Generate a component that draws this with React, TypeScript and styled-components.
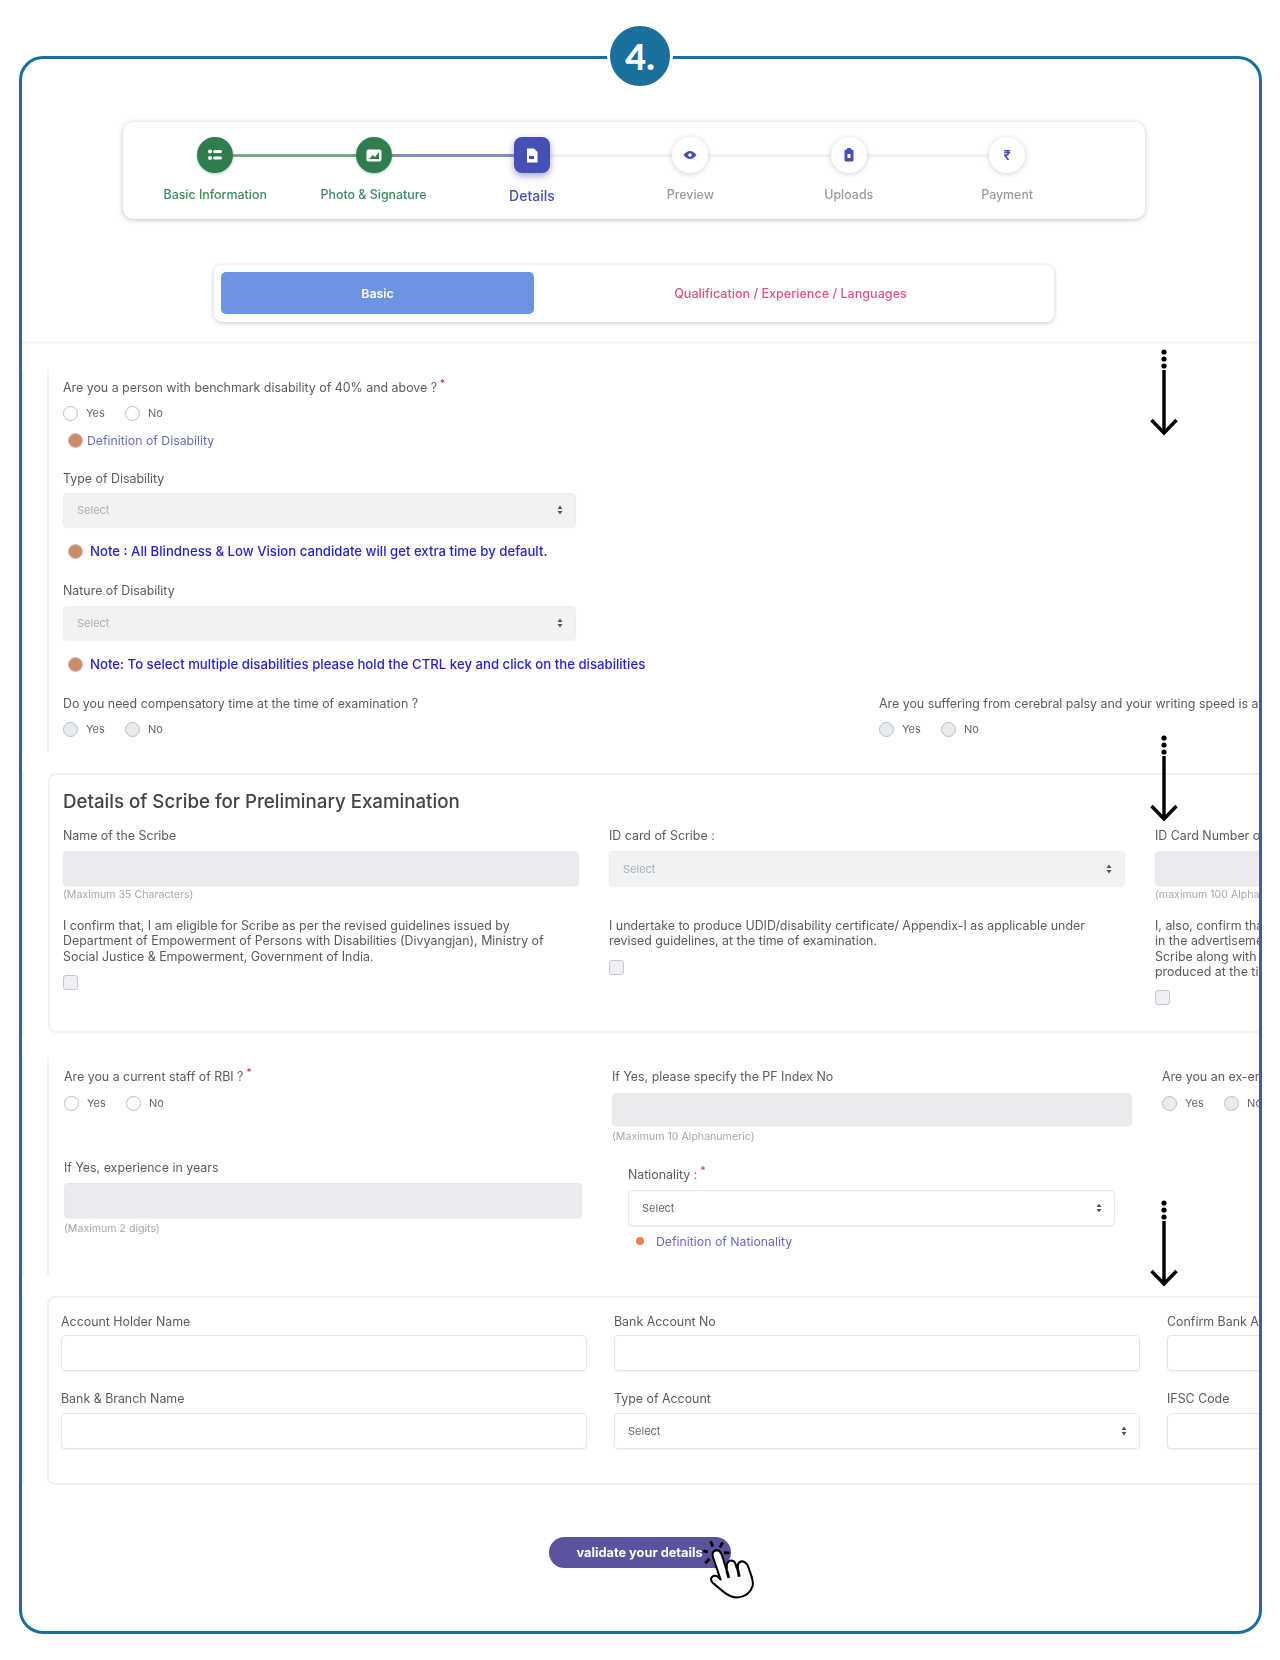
import React from "react";
import styled, { createGlobalStyle } from "styled-components";

const GlobalStyle = createGlobalStyle`
  html, body {
    margin: 0;
    padding: 0;
    background: #fff;
    font-family: "Inter", "Liberation Sans", sans-serif;
  }
`;

const Page = styled.div`
  width: 1280px;
  height: 1660px;
  padding: 56px 18px 0 19px;
  box-sizing: border-box;
  overflow: hidden;
`;
const Frame = styled.div`
  position: relative;
  height: 1578px;
  box-sizing: border-box;
  border: 3px solid #1b6f9c;
  border-radius: 24px;
  background: #fff;
`;
const Badge = styled.div`
  position: absolute;
  top: -36px;
  left: 585px;
  width: 60px;
  height: 60px;
  border: 3px solid #fff;
  border-radius: 50%;
  background: #1b6f9c;
  color: #fff;
  font: 900 36px/60px "Lato", sans-serif;
  text-align: center;
`;
const Clip = styled.div`
  height: 100%;
  overflow: hidden;
  border-radius: 21px;
  filter: blur(0.7px);
`;

/* stepper */
const StepCard = styled.div`
  width: 1022px;
  height: 97px;
  margin: 63px 0 0 101px;
  padding: 15px 0 0 13px;
  box-sizing: border-box;
  display: grid;
  grid-template-columns: repeat(6, 158.4px);
  background: #fff;
  border-radius: 10px;
  box-shadow: 0 1px 5px rgba(0, 0, 0, 0.25);
`;
const Step = styled.div<{ $line?: string }>`
  position: relative;
  display: flex;
  flex-direction: column;
  align-items: center;
  &::after {
    content: "";
    display: ${(p) => (p.$line ? "block" : "none")};
    position: absolute;
    top: 17px;
    left: 50%;
    width: 158px;
    height: 3px;
    background: ${(p) => p.$line};
  }
`;
const StepIcon = styled.div<{ $kind: "done" | "active" | "todo" }>`
  position: relative;
  z-index: 1;
  width: 36px;
  height: 36px;
  box-sizing: border-box;
  display: flex;
  align-items: center;
  justify-content: center;
  border-radius: ${(p) => (p.$kind === "active" ? "8px" : "50%")};
  color: ${(p) => (p.$kind === "todo" ? "#4650b4" : "#fff")};
  font: 700 13px "Inter", sans-serif;
  background: ${(p) =>
    p.$kind === "done" ? "#2f7d4f" : p.$kind === "active" ? "#4650b4" : "#fff"};
  box-shadow: ${(p) =>
    p.$kind === "active"
      ? "0 3px 7px rgba(70, 80, 180, 0.5)"
      : p.$kind === "todo"
        ? "0 1px 6px rgba(0, 0, 0, 0.18)"
        : "0 1px 3px rgba(47, 125, 79, 0.4)"};
`;
const StepLabel = styled.div<{ $color: string; $big?: boolean }>`
  margin-top: ${(p) => (p.$big ? "16px" : "15px")};
  font-size: ${(p) => (p.$big ? "14px" : "12.4px")};
  line-height: 14px;
  font-weight: 500;
  color: ${(p) => p.$color};
  white-space: nowrap;
`;

/* tabs */
const TabCard = styled.div`
  width: 840px;
  height: 57px;
  margin: 46px 0 0 192px;
  padding: 7px 7px 8px;
  box-sizing: border-box;
  display: flex;
  background: #fff;
  border-radius: 8px;
  box-shadow: 0 1px 5px rgba(0, 0, 0, 0.22);
`;
const ActiveTab = styled.div`
  width: 313px;
  height: 42px;
  display: flex;
  align-items: center;
  justify-content: center;
  border-radius: 5px;
  background: #6d93e3;
  color: #fff;
  font-size: 12.4px;
  font-weight: 600;
`;
const IdleTab = styled.div`
  flex: 1;
  display: flex;
  align-items: center;
  justify-content: center;
  color: #d8587f;
  font-size: 12.6px;
  font-weight: 500;
`;
const Divider = styled.div`
  height: 3px;
  margin-top: 19px;
  background: #f6f6f6;
`;

/* page sections */
const Rail = styled.div<{ $top: number; $height: number }>`
  height: ${(p) => p.$height}px;
  margin-top: ${(p) => p.$top}px;
  padding-left: 23px;
  box-sizing: border-box;
  border-left: 2px solid #f5f5f5;
`;
const RuledBlock = styled.div<{ $pad: number; $left?: number }>`
  height: 100%;
  padding: ${(p) => p.$pad}px 0 0 ${(p) => p.$left ?? 15}px;
  box-sizing: border-box;
  border-left: 2px solid #f3f3f3;
`;
const Card = styled.div`
  width: 1300px;
  box-sizing: border-box;
  border: 2px solid #f1f1f2;
  border-radius: 8px;
`;
const ScribeCard = styled(Card)`
  margin: 4px 0 0 1px;
  height: 260px;
  padding: 15px 0 0 13px;
`;
const BankCard = styled(Card)`
  height: 189px;
  padding: 16px 0 0 12px;
`;
const Title = styled.h3`
  margin: 0;
  font-size: 18.7px;
  line-height: 24px;
  font-weight: 500;
  color: #444;
`;
const Label = styled.div<{ $mt?: number; $mb?: number }>`
  margin-top: ${(p) => p.$mt ?? 0}px;
  margin-bottom: ${(p) => p.$mb ?? 0}px;
  font-size: 12.4px;
  line-height: 16px;
  color: #5b5b5b;
  white-space: nowrap;
`;
const Req = styled.sup`
  color: #d3232f;
  font-size: 10px;
  line-height: 0;
  margin-left: 3px;
`;
const RadioRow = styled.div<{ $mt?: number }>`
  display: flex;
  align-items: center;
  height: 16px;
  margin-top: ${(p) => p.$mt ?? 10}px;
  font-size: 11px;
  color: #666;
`;
const Radio = styled.span<{ $off?: boolean }>`
  width: 15px;
  height: 15px;
  box-sizing: border-box;
  border: 1px solid #b9bcc0;
  border-radius: 50%;
  background: ${(p) => (p.$off ? "#e9ecef" : "#fff")};
  margin-right: 8px;
`;
const RadioText = styled.span`
  width: 39px;
`;
const LinkRow = styled.div<{ $mt: number; $gap: number; $left?: number }>`
  display: flex;
  align-items: center;
  gap: ${(p) => p.$gap}px;
  height: 18px;
  margin-top: ${(p) => p.$mt}px;
  padding-left: ${(p) => p.$left ?? 5}px;
`;
const Dot = styled.span`
  width: 15px;
  height: 15px;
  box-sizing: border-box;
  border: 1px solid #c4c4c4;
  border-radius: 50%;
  background: #cf8a68;
`;
const SmallDot = styled.span`
  width: 8px;
  height: 8px;
  border-radius: 50%;
  background: #ec8350;
  margin-left: 4px;
`;
const DefLink = styled.span`
  font-size: 12.3px;
  color: #6a6cc0;
  white-space: nowrap;
`;
const Note = styled.span`
  font-size: 13.2px;
  font-weight: 500;
  color: #2a1fc4;
  white-space: nowrap;
`;
const SelectBox = styled.div<{ $w?: number; $h?: number; $off?: boolean }>`
  width: ${(p) => (p.$w ? `${p.$w}px` : "100%")};
  height: ${(p) => p.$h ?? 34}px;
  padding: 0 12px 0 13px;
  box-sizing: border-box;
  display: flex;
  align-items: center;
  justify-content: space-between;
  border-radius: 4px;
  font-size: 11px;
  color: ${(p) => (p.$off ? "#a9adb2" : "#666")};
  background: ${(p) => (p.$off ? "#f1f2f4" : "#fff")};
  border: 1px solid ${(p) => (p.$off ? "#eceef0" : "#e6e7ea")};
  box-shadow: 0 1px 2px rgba(0, 0, 0, 0.06);
`;
const TextBox = styled.div<{ $h?: number; $off?: boolean }>`
  height: ${(p) => p.$h ?? 36}px;
  box-sizing: border-box;
  border-radius: 4px;
  background: ${(p) => (p.$off ? "#e9ebee" : "#fff")};
  border: 1px solid ${(p) => (p.$off ? "#e6e8eb" : "#e4e5e9")};
  box-shadow: 0 1px 2px rgba(0, 0, 0, 0.05);
`;
const Hint = styled.div<{ $mt?: number }>`
  margin-top: ${(p) => p.$mt ?? 3}px;
  font-size: 10.6px;
  line-height: 12px;
  color: #a4a7ab;
  white-space: nowrap;
`;
const Para = styled.p`
  margin: 17px 0 0;
  font-size: 12.4px;
  line-height: 15.3px;
  color: #5a5a5a;
  white-space: nowrap;
`;
const Check = styled.div`
  width: 15px;
  height: 15px;
  margin-top: 11px;
  box-sizing: border-box;
  border: 1px solid #c5c9cf;
  border-radius: 3px;
  background: #eef0f3;
`;
const CompRow = styled.div`
  display: grid;
  grid-template-columns: 816px 600px;
  margin-top: 23px;
`;
const ScribeGrid = styled.div`
  display: grid;
  grid-template-columns: repeat(3, 516px);
  column-gap: 30px;
  margin-top: 14px;
`;
const StaffGrid = styled.div<{ $mt?: number }>`
  display: grid;
  grid-template-columns: 518px 520px 400px;
  column-gap: 30px;
  margin-top: ${(p) => p.$mt ?? 0}px;
`;
const Nationality = styled.div`
  padding: 7px 17px 0 16px;
`;
const BankGrid = styled.div<{ $mt?: number }>`
  display: grid;
  grid-template-columns: repeat(3, 526px);
  column-gap: 27px;
  margin-top: ${(p) => p.$mt ?? 0}px;
`;

/* submit and overlays */
const SubmitRow = styled.div`
  display: flex;
  justify-content: center;
  margin-top: 52px;
  padding-right: 2px;
`;
const SubmitButton = styled.div`
  width: 182px;
  height: 31px;
  box-sizing: border-box;
  padding-left: 28px;
  display: flex;
  align-items: center;
  border-radius: 16px;
  background: #5a549f;
  color: #fff;
  font-size: 12.8px;
  font-weight: 700;
  white-space: nowrap;
`;
const OverlayHand = styled.svg`
  position: absolute;
  left: 677px;
  top: 1479px;
`;
const OverlayArrow = styled.svg<{ $top: number }>`
  position: absolute;
  left: 1127px;
  top: ${(p) => p.$top}px;
`;

const Updown = () => (
  <svg width="6" height="10" viewBox="0 0 6 10">
    <path d="M3 0.5 L5.5 4 H0.5 Z M3 9.5 L0.5 6 H5.5 Z" fill="#555" />
  </svg>
);

const YesNo = ({ off, mt }: { off?: boolean; mt?: number }) => (
  <RadioRow $mt={mt}>
    <Radio $off={off} />
    <RadioText>Yes</RadioText>
    <Radio $off={off} />
    <RadioText>No</RadioText>
  </RadioRow>
);

const Arrow = ({ top }: { top: number }) => (
  <OverlayArrow $top={top} width="30" height="88" viewBox="0 0 30 88">
    <circle cx="15" cy="3" r="2.6" fill="#000" />
    <circle cx="15" cy="10" r="2.6" fill="#000" />
    <circle cx="15" cy="17" r="2.6" fill="#000" />
    <path d="M15 21 V84 M2.5 71 L15 84 L27.5 71" fill="none" stroke="#000" strokeWidth="3.4" />
  </OverlayArrow>
);

const stepIcons = [
  <svg width="16" height="14" viewBox="0 0 16 14" fill="#fff">
    <circle cx="3" cy="3.5" r="2" />
    <rect x="6" y="2" width="9" height="3" rx="1.5" />
    <circle cx="3" cy="10" r="2" />
    <rect x="6" y="8.5" width="9" height="3" rx="1.5" />
  </svg>,
  <svg width="16" height="13" viewBox="0 0 16 13">
    <rect x="0.5" y="0.5" width="15" height="12" rx="2" fill="#fff" />
    <path d="M3 10 L7 6 L9 8 L13 3 V10 Z" fill="#2f7d4f" />
  </svg>,
  <svg width="12" height="15" viewBox="0 0 12 15">
    <path d="M1 0.5 H8 L11.5 4 V14.5 H1 Z" fill="#fff" />
    <rect x="3" y="8" width="5" height="3" fill="#4650b4" />
  </svg>,
  <svg width="14" height="10" viewBox="0 0 14 10">
    <path d="M0.5 5 Q7 -3 13.5 5 Q7 13 0.5 5 Z" fill="#4650b4" />
    <circle cx="7" cy="5" r="1.8" fill="#fff" />
  </svg>,
  <svg width="10" height="14" viewBox="0 0 10 14">
    <rect x="0.5" y="1.5" width="9" height="12" rx="1.5" fill="#4650b4" />
    <rect x="3" y="0" width="4" height="3" rx="1" fill="#4650b4" />
    <rect x="3.5" y="6" width="3" height="4" fill="#fff" />
  </svg>,
  "₹",
];

const steps = [
  { label: "Basic Information", kind: "done", color: "#3f8a60", line: "#7aa98c" },
  { label: "Photo & Signature", kind: "done", color: "#3f8a60", line: "#8a89c4" },
  { label: "Details", kind: "active", color: "#4650a8", line: "#f3f3f3" },
  { label: "Preview", kind: "todo", color: "#9a9a9a", line: "#f3f3f3" },
  { label: "Uploads", kind: "todo", color: "#9a9a9a", line: "#f3f3f3" },
  { label: "Payment", kind: "todo", color: "#9a9a9a" },
] as const;

export default function App() {
  return (
    <Page>
      <GlobalStyle />
      <Frame>
        <Clip>
          <StepCard>
            {steps.map((s, i) => (
              <Step key={s.label} $line={"line" in s ? s.line : undefined}>
                <StepIcon $kind={s.kind}>{stepIcons[i]}</StepIcon>
                <StepLabel $color={s.color} $big={s.kind === "active"}>
                  {s.label}
                </StepLabel>
              </Step>
            ))}
          </StepCard>

          <TabCard>
            <ActiveTab>Basic</ActiveTab>
            <IdleTab>Qualification / Experience / Languages</IdleTab>
          </TabCard>
          <Divider />

          <Rail $top={26} $height={382}>
            <RuledBlock $pad={10} $left={14}>
              <Label>
                Are you a person with benchmark disability of 40% and above ?<Req>*</Req>
              </Label>
              <YesNo mt={9} />
              <LinkRow $mt={10} $gap={4}>
                <Dot />
                <DefLink>Definition of Disability</DefLink>
              </LinkRow>
              <Label $mt={22} $mb={6}>Type of Disability</Label>
              <SelectBox $w={513} $off>
                Select <Updown />
              </SelectBox>
              <LinkRow $mt={15} $gap={7}>
                <Dot />
                <Note>Note : All Blindness &amp; Low Vision candidate will get extra time by default.</Note>
              </LinkRow>
              <Label $mt={23} $mb={7}>Nature of Disability</Label>
              <SelectBox $w={513} $off>
                Select <Updown />
              </SelectBox>
              <LinkRow $mt={15} $gap={7}>
                <Dot />
                <Note>Note: To select multiple disabilities please hold the CTRL key and click on the disabilities</Note>
              </LinkRow>
              <CompRow>
                <div>
                  <Label>Do you need compensatory time at the time of examination ?</Label>
                  <YesNo off mt={9} />
                </div>
                <div>
                  <Label>Are you suffering from cerebral palsy and your writing speed is affected ?</Label>
                  <YesNo off mt={9} />
                </div>
              </CompRow>
            </RuledBlock>
          </Rail>

          <Rail $top={21} $height={265}>
            <ScribeCard>
              <Title>Details of Scribe for Preliminary Examination</Title>
              <ScribeGrid>
                <div>
                  <Label $mb={7}>Name of the Scribe</Label>
                  <TextBox $off $h={35} />
                  <Hint>(Maximum 35 Characters)</Hint>
                  <Para>
                    I confirm that, I am eligible for Scribe as per the revised guidelines issued by
                    <br />
                    Department of Empowerment of Persons with Disabilities (Divyangjan), Ministry of
                    <br />
                    Social Justice &amp; Empowerment, Government of India.
                  </Para>
                  <Check />
                </div>
                <div>
                  <Label $mb={7}>ID card of Scribe :</Label>
                  <SelectBox $off $h={35}>
                    Select <Updown />
                  </SelectBox>
                  <Hint>&nbsp;</Hint>
                  <Para>
                    I undertake to produce UDID/disability certificate/ Appendix-I as applicable under
                    <br />
                    revised guidelines, at the time of examination.
                  </Para>
                  <Check />
                </div>
                <div>
                  <Label $mb={7}>ID Card Number of Scribe</Label>
                  <TextBox $off $h={35} />
                  <Hint>(maximum 100 Alphanumeric)</Hint>
                  <Para>
                    I, also, confirm that all the details
                    <br />
                    in the advertisement are met
                    <br />
                    Scribe along with the letter
                    <br />
                    produced at the time of exam
                  </Para>
                  <Check />
                </div>
              </ScribeGrid>
            </ScribeCard>
          </Rail>

          <Rail $top={19} $height={219}>
            <RuledBlock $pad={12}>
              <StaffGrid>
                <div>
                  <Label>
                    Are you a current staff of RBI ?<Req>*</Req>
                  </Label>
                  <YesNo />
                </div>
                <div>
                  <Label $mb={8}>If Yes, please specify the PF Index No</Label>
                  <TextBox $off $h={33} />
                  <Hint $mt={5}>(Maximum 10 Alphanumeric)</Hint>
                </div>
                <div>
                  <Label>Are you an ex-employee of RBI ?</Label>
                  <YesNo off />
                </div>
              </StaffGrid>
              <StaffGrid $mt={17}>
                <div>
                  <Label $mb={7}>If Yes, experience in years</Label>
                  <TextBox $off $h={35} />
                  <Hint $mt={5}>(Maximum 2 digits)</Hint>
                </div>
                <Nationality>
                  <Label $mb={7}>
                    Nationality :<Req>*</Req>
                  </Label>
                  <SelectBox $h={36}>
                    Select <Updown />
                  </SelectBox>
                  <LinkRow $mt={6} $gap={12} $left={4}>
                    <SmallDot />
                    <DefLink>Definition of Nationality</DefLink>
                  </LinkRow>
                </Nationality>
              </StaffGrid>
            </RuledBlock>
          </Rail>

          <Rail $top={20} $height={189}>
            <BankCard>
              <BankGrid>
                <div>
                  <Label $mb={5}>Account Holder Name</Label>
                  <TextBox />
                </div>
                <div>
                  <Label $mb={5}>Bank Account No</Label>
                  <TextBox />
                </div>
                <div>
                  <Label $mb={5}>Confirm Bank Account No</Label>
                  <TextBox />
                </div>
              </BankGrid>
              <BankGrid $mt={20}>
                <div>
                  <Label $mb={6}>Bank &amp; Branch Name</Label>
                  <TextBox />
                </div>
                <div>
                  <Label $mb={6}>Type of Account</Label>
                  <SelectBox $h={36}>
                    Select <Updown />
                  </SelectBox>
                </div>
                <div>
                  <Label $mb={6}>IFSC Code</Label>
                  <TextBox />
                </div>
              </BankGrid>
            </BankCard>
          </Rail>

          <SubmitRow>
            <SubmitButton>validate your details</SubmitButton>
          </SubmitRow>
        </Clip>

        <Badge>4.</Badge>
        <Arrow top={290} />
        <Arrow top={676} />
        <Arrow top={1141} />
        <OverlayHand width="59" height="64" viewBox="600 120 170 185">
          <path
            d="M662 240 L640 175 Q635 158 650 155 Q662 155 667 172 L680 215 L680 198 Q682 185 695 185 Q705 187 708 205 L712 212 L712 197 Q716 186 728 188 Q740 192 745 212 Q758 245 755 258 Q745 290 710 292 Q690 292 670 275 L640 250 Q630 240 638 232 Q645 226 655 232 Z"
            fill="#fff"
            stroke="#000"
            strokeWidth="6"
            strokeLinejoin="round"
          />
          <path
            d="M680 215 L686 235 M712 212 L716 232 M633 130 L640 145 M668 133 L660 148 M612 157 L625 160 M672 162 L688 163 M618 193 L630 180"
            fill="none"
            stroke="#000"
            strokeWidth="8"
          />
        </OverlayHand>
      </Frame>
    </Page>
  );
}
